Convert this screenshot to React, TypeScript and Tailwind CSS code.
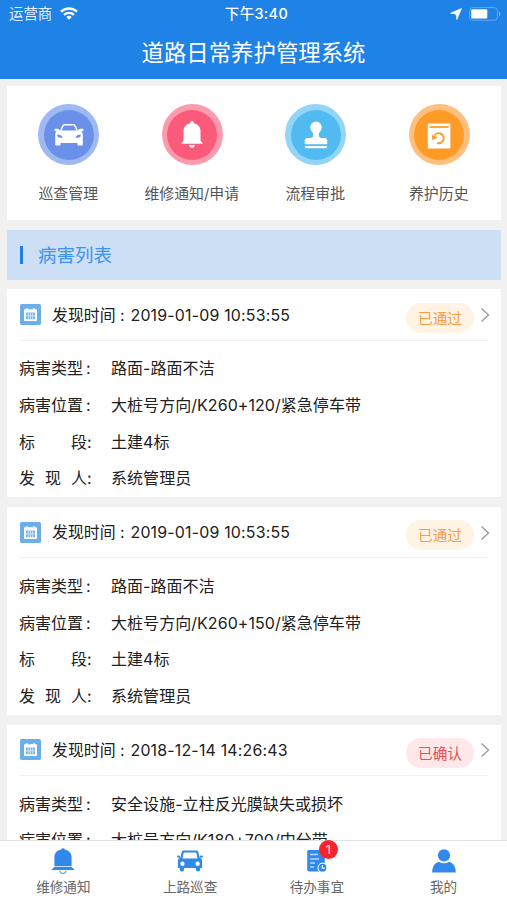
import React from "react";

const FONT = "font-['Inter','Noto_Sans_CJK_SC',sans-serif]";

function CarFront() {
  return (
    <svg viewBox="0 0 30 24" className="h-[24px] w-[30px]" fill="none">
      <path d="M6.300 9 8.600 3.400C9 2.300 9.700 1.800 10.900 1.800h8.200c1.200 0 1.900.5 2.300 1.600L23.700 9" stroke="#fff" strokeWidth="1.500" />
      <path
        fill="#fff"
        fillRule="evenodd"
        d="M5.800 7.500h18.400l.7-1c.3-.5.8-.7 1.400-.7h1.900c1.100 0 1.600.7 1.300 1.500-.2.7-.9 1.100-2 1.200.9 1 1.300 2.100 1.300 3.500v9.300c0 .8-.5 1.300-1.300 1.300h-2.700c-.8 0-1.300-.5-1.300-1.300v-1.400h-17v1.400c0 .8-.5 1.300-1.300 1.300H2.500c-.8 0-1.300-.5-1.300-1.300V12c0-1.400.4-2.500 1.300-3.500-1.100-.1-1.800-.5-2-1.200-.3-.8.2-1.500 1.300-1.500h1.900c.6 0 1.100.2 1.400.7zM3.300 12.500c0 1.600 1.500 2.400 5.200 2.300-.3-1.900-1.900-3-5.200-3.300zm23.400 0v-1c-3.300.3-4.900 1.400-5.200 3.300 3.700.1 5.200-.7 5.200-2.300z"
      />
    </svg>
  );
}

function BellSolid() {
  return (
    <svg viewBox="0 0 22 27" className="h-[27px] w-[22px]" fill="#fff">
      <path d="M9.200 1.800a1.800 1.800 0 0 1 3.600 0v.4c4.200.9 6.700 3.700 6.700 7.800v8.500c0 1.300.7 2.300 2 3.400.4.300.2.900-.3.900H.8c-.5 0-.7-.6-.3-.9 1.300-1.100 2-2.100 2-3.400V10c0-4.100 2.500-6.900 6.700-7.800z" />
      <path d="M8.200 24h5.600a2.800 2.800 0 0 1-5.600 0z" />
    </svg>
  );
}

function Stamp() {
  return (
    <svg viewBox="0 0 24 28" className="h-[28px] w-[24px]" fill="#fff">
      <path d="M12 .5a5.700 5.700 0 0 1 5.700 5.700c0 2.200-1 3.600-2 4.900-.7 1-1 1.900-.9 3.200.1 1.800 1 2.700 3 2.700h2.500c1.900 0 3 1.100 3 2.900v2.600c0 .4-.2.700-.7.700H1.400c-.5 0-.7-.3-.7-.7v-2.600c0-1.800 1.100-2.900 3-2.900h2.500c2 0 2.900-.9 3-2.700.1-1.300-.2-2.200-.9-3.200-1-1.300-2-2.700-2-4.900A5.700 5.700 0 0 1 12 .5z" />
      <rect x="1" y="25" width="22" height="2.200" rx=".4" />
    </svg>
  );
}

function HistoryBook() {
  return (
    <svg viewBox="0 0 24 26" className="mt-[2px] h-[26px] w-[24px]" fill="none">
      <rect x=".8" y=".5" width="22.600" height="25" rx=".8" fill="#fff" />
      <path d="M2.600 4h19" stroke="#fe9b26" strokeWidth="1.800" />
      <path d="M7.500 12.600a5 5 0 1 1 2.600 7.300" stroke="#fe9b26" strokeWidth="2" />
      <path d="m4.800 11.500.5 5.600 5.300-2.400z" fill="#fe9b26" />
    </svg>
  );
}

function Calendar() {
  return (
    <svg viewBox="0 0 21 21" className="h-[21px] w-[21px] shrink-0" fill="none">
      <rect width="21" height="21" rx="1.800" fill="#6aaeea" />
      <path d="M5 5.300h1.300V4h1.300v1.300h5.800V4h1.300v1.300H16c.6 0 1 .4 1 1V16c0 .6-.4 1-1 1H5c-.6 0-1-.4-1-1V6.300c0-.6.4-1 1-1z" fill="#fff" />
      <path d="M6 8.500h9v6.700H6z" fill="#7ab6ec" />
      <path d="M8.300 8.500v6.700m2.200-6.700v6.700m2.200-6.700v6.700M6 11.800h9" stroke="#dcebfa" strokeWidth=".8" />
    </svg>
  );
}

const shortcuts = [
  { label: "巡查管理", ring: "bg-[#9fb9f3]", disc: "bg-[#6a90ea]", icon: <CarFront /> },
  { label: "维修通知/申请", ring: "bg-[#fd9bae]", disc: "bg-[#fb5a7b]", icon: <BellSolid /> },
  { label: "流程审批", ring: "bg-[#92d5f7]", disc: "bg-[#51baf1]", icon: <Stamp /> },
  { label: "养护历史", ring: "bg-[#ffc07f]", disc: "bg-[#fe9b26]", icon: <HistoryBook /> },
];

type Defect = { time: string; status: string; type: string; place: string };

const defects: Defect[] = [
  { time: "2019-01-09 10:53:55", status: "已通过", type: "路面-路面不洁", place: "大桩号方向/K260+120/紧急停车带" },
  { time: "2019-01-09 10:53:55", status: "已通过", type: "路面-路面不洁", place: "大桩号方向/K260+150/紧急停车带" },
  { time: "2018-12-14 14:26:43", status: "已确认", type: "安全设施-立柱反光膜缺失或损坏", place: "大桩号方向/K180+700/中分带" },
];

function Field({ label, value }: { label: string; value: string }) {
  const full = label.length === 4;
  return (
    <div className="flex h-[36.600px] items-center text-[16px] leading-6">
      {full ? (
        <span className="w-[64.500px] whitespace-nowrap">{label}</span>
      ) : (
        <div className="flex w-[68px] justify-between">
          {label.split("").map((c) => (
            <span key={c}>{c}</span>
          ))}
        </div>
      )}
      <span className={full ? "w-[27.500px] pl-[2.500px]" : "w-[24px]"}>:</span>
      <span className="tracking-[0.050px] whitespace-nowrap">{value}</span>
    </div>
  );
}

function DefectCard({ d }: { d: Defect }) {
  const tone = d.status === "已通过" ? "bg-[#fff3e4] text-[#fb9b45]" : "bg-[#fee8ea] text-[#f34a4a]";
  return (
    <article className="h-[207.600px] shrink-0 bg-white pl-[12px]">
      <div className="mr-[13px] ml-px flex h-[51.500px] items-center border-b border-[#f1f1f1]">
        <Calendar />
        <span className="mt-[2px] ml-[11px] flex text-[15.900px] leading-6">
          <span className="w-[78.500px] whitespace-pre">发现时间 :</span>
          <span className="tracking-[0.2px]">{d.time}</span>
        </span>
        <span className={`mt-[6px] -mr-[1px] ml-auto flex h-[30px] w-[68px] items-center justify-center rounded-full pt-[2px] text-[14.700px] ${tone}`}>
          {d.status}
        </span>
        <svg viewBox="0 0 10 16" className="mt-px -mr-[2px] ml-[7px] h-[16px] w-[10px]" fill="none">
          <path d="m1.500 1.500 7 6.500-7 6.500" stroke="#9b9b9b" strokeWidth="1.400" />
        </svg>
      </div>
      <div className="pt-[9.200px]">
        <Field label="病害类型" value={d.type} />
        <Field label="病害位置" value={d.place} />
        <Field label="标段" value="土建4标" />
        <Field label="发现人" value="系统管理员" />
      </div>
    </article>
  );
}

function TabBell() {
  return (
    <svg viewBox="0 0 24 28" className="h-[28px] w-[24px]" fill="#2f88ea">
      <path d="M10.200 2.500a1.900 1.900 0 0 1 3.600 0c4.300.8 6.800 3.700 6.800 7.800v8.900H3.400v-8.900c0-4.100 2.500-7 6.800-7.800z" />
      <path d="M3.400 20.100h17.200l3.200 3H.2z" />
      <path d="M8.800 23.600c.4 2 1.500 2.900 3.200 2.900s2.800-.9 3.200-2.900" fill="none" stroke="#68aaf0" strokeWidth="1.200" />
    </svg>
  );
}

function TabCar() {
  return (
    <svg viewBox="0 0 26 24" className="h-[24px] w-[26px]" fill="#2f88ea">
      <path
        fillRule="evenodd"
        d="M7 1.500h12c1.300 0 2.100.6 2.400 1.800l1.100 5.200c1.800.6 2.600 1.900 2.600 3.900v5.500c0 .7-.4 1.200-1.100 1.200h-.8v1.400c0 1.300-.8 2-2.100 2s-2.100-.7-2.100-2v-1.400H7v1.400c0 1.300-.8 2-2.100 2s-2.100-.7-2.100-2v-1.400H2c-.7 0-1.100-.5-1.100-1.200v-5.500c0-2 .8-3.300 2.600-3.900l1.100-5.200C4.900 2.100 5.700 1.500 7 1.500zm.5 1.900c-.6 0-.9.3-1 .8L5.500 9.500h15l-1-5.300c-.1-.5-.4-.8-1-.8zM5.400 12.500a2.200 2.200 0 1 0 0 4.400 2.200 2.200 0 0 0 0-4.400zm15.200 0a2.200 2.200 0 1 0 0 4.400 2.200 2.200 0 0 0 0-4.400z"
      />
      <rect x=".1" y="6.400" width="3.100" height="2.400" rx="1.200" />
      <rect x="22.800" y="6.400" width="3.100" height="2.400" rx="1.200" />
    </svg>
  );
}

function TabTodo() {
  return (
    <svg viewBox="0 0 22 24" className="h-[24px] w-[22px]" fill="none">
      <rect x="1.200" y="1" width="17.600" height="21.600" rx="1.800" fill="#3189ed" />
      <path d="M4 5.500h8M4 10h9M4 14h5M4 18h4" stroke="#b9d9fa" strokeWidth="1.600" />
      <circle cx="16.500" cy="18.800" r="4.500" fill="#3189ed" stroke="#fff" strokeWidth="1.100" />
      <path d="M16.300 16.300v2.900h2.500" stroke="#fff" strokeWidth="1.200" />
    </svg>
  );
}

function TabUser() {
  return (
    <svg viewBox="0 0 24 24" className="h-[24px] w-[24px]" fill="#3189ed">
      <circle cx="12" cy="6.400" r="6.100" />
      <path d="M.2 23.500c0-5.900 2.600-9.700 7-10.700 1.300 1 2.900 1.500 4.800 1.500s3.500-.5 4.800-1.500c4.400 1 7 4.800 7 10.700z" />
    </svg>
  );
}

const tabs = [
  { label: "维修通知", icon: <TabBell /> },
  { label: "上路巡查", icon: <TabCar /> },
  { label: "待办事宜", icon: <TabTodo />, badge: 1 },
  { label: "我的", icon: <TabUser /> },
];

export default function App() {
  return (
    <div className={`flex h-[900px] w-[507px] flex-col overflow-hidden bg-[#f1f1f1] text-[#202020] ${FONT}`}>
      <header className="h-[79px] shrink-0 bg-[#1f82e6] text-white">
        <div className="grid h-[28px] grid-cols-3 items-center pr-[6px] pl-[9px] text-[14.400px]">
          <div className="flex items-center gap-[8px] text-[#e4f0fd]">
            <span>运营商</span>
            <svg viewBox="0 0 18 13" className="h-[13px] w-[18px]" fill="none" stroke="#fff" strokeWidth="2.400">
              <path d="M1 4.700a11.600 11.600 0 0 1 16 0M4 7.900a7.300 7.300 0 0 1 10 0" />
              <path d="m6.200 10 2.800 2.800L11.800 10a4.100 4.100 0 0 0-5.600 0z" fill="#fff" stroke="none" />
            </svg>
          </div>
          <div className="pl-[3px] text-center font-medium tracking-[0.4px] whitespace-nowrap">下午3:40</div>
          <div className="flex items-center justify-end gap-[7px]">
            <svg viewBox="0 0 12 12" className="h-[12px] w-[12px]" fill="#fff" stroke="#fff" strokeWidth=".7">
              <path d="M11.500.5 6.900 11.500 6 6.100.5 5.200z" />
            </svg>
            <svg viewBox="0 0 32 14" className="h-[14px] w-[32px]" fill="none">
              <rect x=".8" y=".6" width="27.600" height="12.600" rx="3" stroke="#6aa9ec" />
              <rect x="2.300" y="2.200" width="16" height="9.400" rx="1.300" fill="#fff" />
              <path d="M30 4.700c1.700.6 1.700 3.900 0 4.500z" fill="#8bbcf0" />
            </svg>
          </div>
        </div>
        <h1 className="flex h-[48px] items-center justify-center pt-px text-[22.400px] font-normal">道路日常养护管理系统</h1>
      </header>

      <main className="flex min-h-0 flex-1 flex-col overflow-hidden pt-[6.500px] pr-[6px] pl-[7px]">
        <nav className="grid h-[134.500px] shrink-0 grid-cols-4 bg-white pt-[18.500px]">
          {shortcuts.map((s) => (
            <div key={s.label} className="flex flex-col items-center">
              <div className={`flex h-[61px] w-[61px] items-center justify-center rounded-full ${s.ring}`}>
                <div className={`flex h-[50px] w-[50px] items-center justify-center rounded-full ${s.disc}`}>{s.icon}</div>
              </div>
              <span className="mt-[19px] mr-px text-[14.900px] leading-[20px] whitespace-nowrap text-[#555]">{s.label}</span>
            </div>
          ))}
        </nav>

        <h2 className="mt-[10px] flex h-[50px] shrink-0 items-center gap-[15px] bg-[#ccdff5] pl-[12.500px] text-[18.500px] font-normal text-[#3f93ea]">
          <span className="h-[18px] w-[3.500px] bg-[#1f7ce2]" />
          <span className="pt-[2px]">病害列表</span>
        </h2>

        <section className="mt-[9.400px] flex flex-col gap-[10px]">
          {defects.map((d, i) => (
            <DefectCard key={i} d={d} />
          ))}
        </section>
      </main>

      <footer className="grid h-[60px] shrink-0 grid-cols-4 border-t border-[#e2e2e2] bg-white">
        {tabs.map((t) => (
          <div key={t.label} className="flex flex-col items-center">
            <div className="relative mt-[6px] flex h-[28px] items-center">
              {t.icon}
              {t.badge && (
                <span className="absolute -top-[7px] left-[13px] flex h-[19px] w-[19px] items-center justify-center rounded-full bg-[#f8242b] text-[12px] text-white">
                  {t.badge}
                </span>
              )}
            </div>
            <span className="mt-[2px] text-[13.600px] leading-[20px] text-[#666]">{t.label}</span>
          </div>
        ))}
      </footer>
    </div>
  );
}
